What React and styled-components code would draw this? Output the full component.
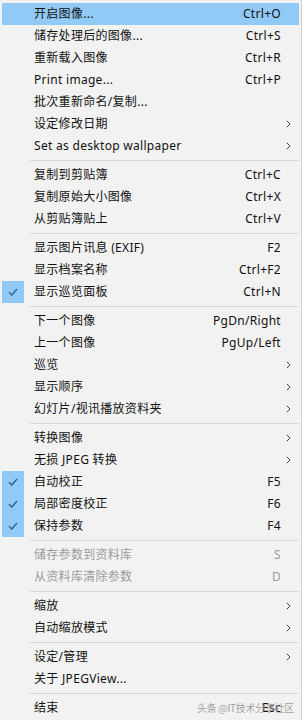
import React from "react";
import styled, { createGlobalStyle } from "styled-components";

const Global = createGlobalStyle`
  html, body { margin: 0; padding: 0; background: #ffffff; }
  body { font-family: "Noto Sans", "Noto Sans CJK SC", sans-serif; }
`;

const Menu = styled.div`
  position: relative;
  width: 302px;
  box-sizing: border-box;
  background: #f2f2f2;
  border-right: 1px solid #cfcfcf;
  padding: 3px 2px 1px 2px;
  display: flex;
  flex-direction: column;
  font-size: 12px;
  letter-spacing: 0.3px;
  color: #111;
`;

const Row = styled.div`
  height: 22px;
  display: grid;
  grid-template-columns: 22px 1fr auto 18px;
  align-items: center;
  background: ${(p) => (p.$hot ? "#91c9f7" : "transparent")};
  color: ${(p) => (p.$disabled ? "#9b9b9b" : "#111")};
`;

const CheckBox = styled.div`
  height: 22px;
  display: flex;
  align-items: center;
  justify-content: center;
  background: ${(p) => (p.$on ? "#91c9f7" : "transparent")};
`;

const Label = styled.span`
  padding-left: 10px;
  white-space: nowrap;
  line-height: 22px;
`;

const Shortcut = styled.span`
  white-space: nowrap;
  text-align: right;
  line-height: 22px;
`;

const Arrow = styled.div`
  display: flex;
  align-items: center;
  padding-left: 5px;
`;

const Separator = styled.div`
  height: 7px;
  display: flex;
  align-items: center;
  padding-left: 28px;
  &::after {
    content: "";
    flex: 1;
    height: 1px;
    background: #d7d7d7;
  }
`;

const Watermark = styled.div`
  position: absolute;
  right: 7px;
  bottom: 5px;
  font-size: 10px;
  color: rgba(150, 150, 150, 0.9);
  font-family: "Noto Sans CJK SC", sans-serif;
  white-space: nowrap;
  letter-spacing: -0.3px;
`;

const Check = () => (
  <svg width="10" height="8" viewBox="0 0 10 8">
    <path d="M1 4.2 L3.8 7 L9 1" fill="none" stroke="#2b5d8e" strokeWidth="1.3" />
  </svg>
);

const Chevron = () => (
  <svg width="5" height="8" viewBox="0 0 5 8">
    <path d="M0.8 0.8 L4 4 L0.8 7.2" fill="none" stroke="#444" strokeWidth="1" />
  </svg>
);

const items = [
  { l: "开启图像...", s: "Ctrl+O", hot: true },
  { l: "储存处理后的图像...", s: "Ctrl+S" },
  { l: "重新载入图像", s: "Ctrl+R" },
  { l: "Print image...", s: "Ctrl+P" },
  { l: "批次重新命名/复制..." },
  { l: "设定修改日期", sub: true },
  { l: "Set as desktop wallpaper", sub: true },
  "-",
  { l: "复制到剪贴簿", s: "Ctrl+C" },
  { l: "复制原始大小图像", s: "Ctrl+X" },
  { l: "从剪贴簿贴上", s: "Ctrl+V" },
  "-",
  { l: "显示图片讯息 (EXIF)", s: "F2" },
  { l: "显示档案名称", s: "Ctrl+F2" },
  { l: "显示巡览面板", s: "Ctrl+N", check: true },
  "-",
  { l: "下一个图像", s: "PgDn/Right" },
  { l: "上一个图像", s: "PgUp/Left" },
  { l: "巡览", sub: true },
  { l: "显示顺序", sub: true },
  { l: "幻灯片/视讯播放资料夹", sub: true },
  "-",
  { l: "转换图像", sub: true },
  { l: "无损 JPEG 转换", sub: true },
  { l: "自动校正", s: "F5", check: true },
  { l: "局部密度校正", s: "F6", check: true },
  { l: "保持参数", s: "F4", check: true },
  "-",
  { l: "储存参数到资料库", s: "S", dis: true },
  { l: "从资料库清除参数", s: "D", dis: true },
  "-",
  { l: "缩放", sub: true },
  { l: "自动缩放模式", sub: true },
  "-",
  { l: "设定/管理", sub: true },
  { l: "关于 JPEGView..." },
  "-",
  { l: "结束", s: "Esc" },
];

export default function App() {
  return (
    <>
      <Global />
      <Menu>
        {items.map((it, i) =>
          it === "-" ? (
            <Separator key={i} />
          ) : (
            <Row key={i} $hot={it.hot} $disabled={it.dis}>
              <CheckBox $on={it.check}>{it.check && <Check />}</CheckBox>
              <Label>{it.l}</Label>
              <Shortcut>{it.s || ""}</Shortcut>
              <Arrow>{it.sub && <Chevron />}</Arrow>
            </Row>
          )
        )}
        <Watermark>头条 @IT技术分享社区</Watermark>
      </Menu>
    </>
  );
}
